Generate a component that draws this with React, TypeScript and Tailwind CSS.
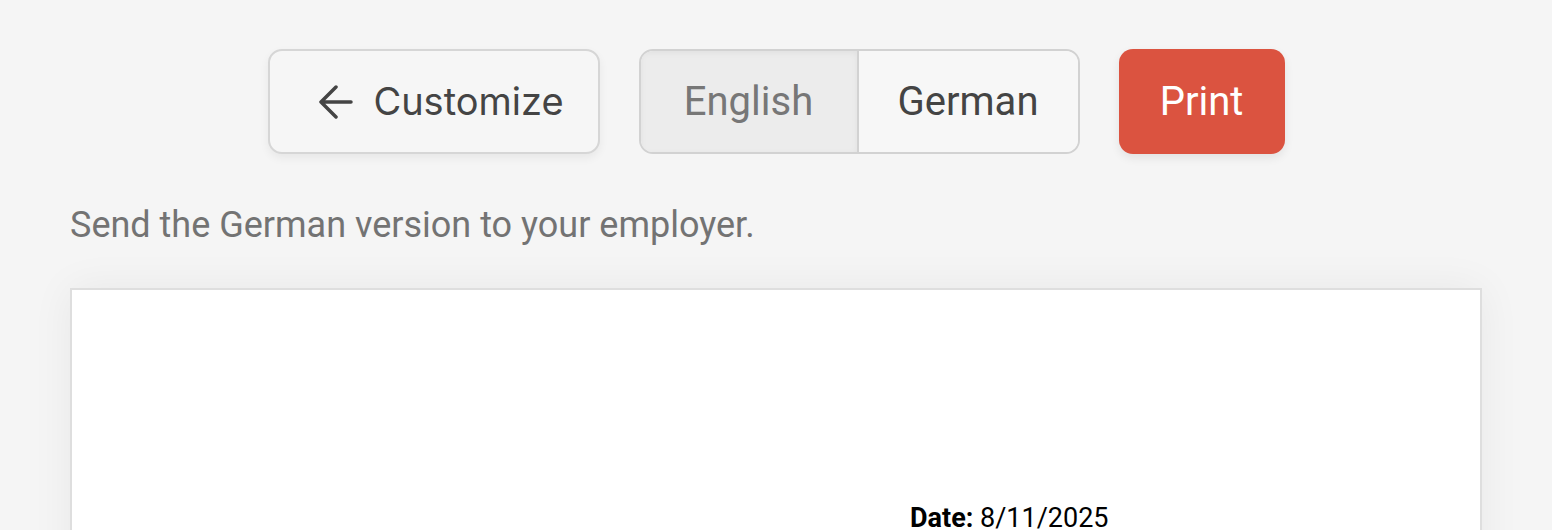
import React from "react";

export default function App() {
  return (
    <div className="min-h-[530px] w-full bg-[#f5f5f5] overflow-hidden">
      <div className="flex justify-center items-center gap-[39px] pt-[49px]">
        <button className="h-[105px] w-[332px] flex items-center justify-center gap-[20px] pl-[16px] rounded-[14px] border-2 border-[#d6d6d6] bg-[#f6f6f6] shadow-[0_4px_10px_rgba(0,0,0,0.06)] text-[#444] font-['Inter',sans-serif] text-[38px]">
          <svg width="34" height="34" viewBox="0 0 34 34" fill="none" stroke="#444" strokeWidth="3.5" strokeLinecap="round" strokeLinejoin="round">
            <path d="M32 17H2M17 2L2 17l15 15" />
          </svg>
          <span className="leading-none -mt-[2px]">Customize</span>
        </button>
        <div className="h-[105px] w-[441px] flex rounded-[14px] border-2 border-[#d2d2d2] overflow-hidden font-['Roboto',sans-serif] text-[40px]">
          <div className="w-[218px] flex items-center justify-center bg-[#ececec] text-[#777] shadow-[inset_0_2px_6px_rgba(0,0,0,0.05)] border-r-2 border-[#d2d2d2]">
            English
          </div>
          <div className="flex-1 flex items-center justify-center bg-[#f7f7f7] text-[#444]">
            German
          </div>
        </div>
        <button className="h-[105px] w-[166px] flex items-center justify-center rounded-[14px] bg-[#db5340] text-white font-['Roboto',sans-serif] text-[40px] shadow-[0_4px_10px_rgba(0,0,0,0.08)]">
          Print
        </button>
      </div>
      <div className="px-[70px]">
        <p className="mt-[44px] text-[#737373] font-['Roboto',sans-serif] text-[36px] leading-[54px]">
          Send the German version to your employer.
        </p>
        <div className="mt-[36px] h-[400px] bg-white border-2 border-[#dedede] shadow-[0_0_40px_rgba(0,0,0,0.06)]">
          <div className="pt-[210px] pl-[838px] font-['Roboto',sans-serif] text-[27px] leading-[36px] text-black">
            <span className="font-bold">Date:</span> 8/11/2025
          </div>
        </div>
      </div>
    </div>
  );
}
